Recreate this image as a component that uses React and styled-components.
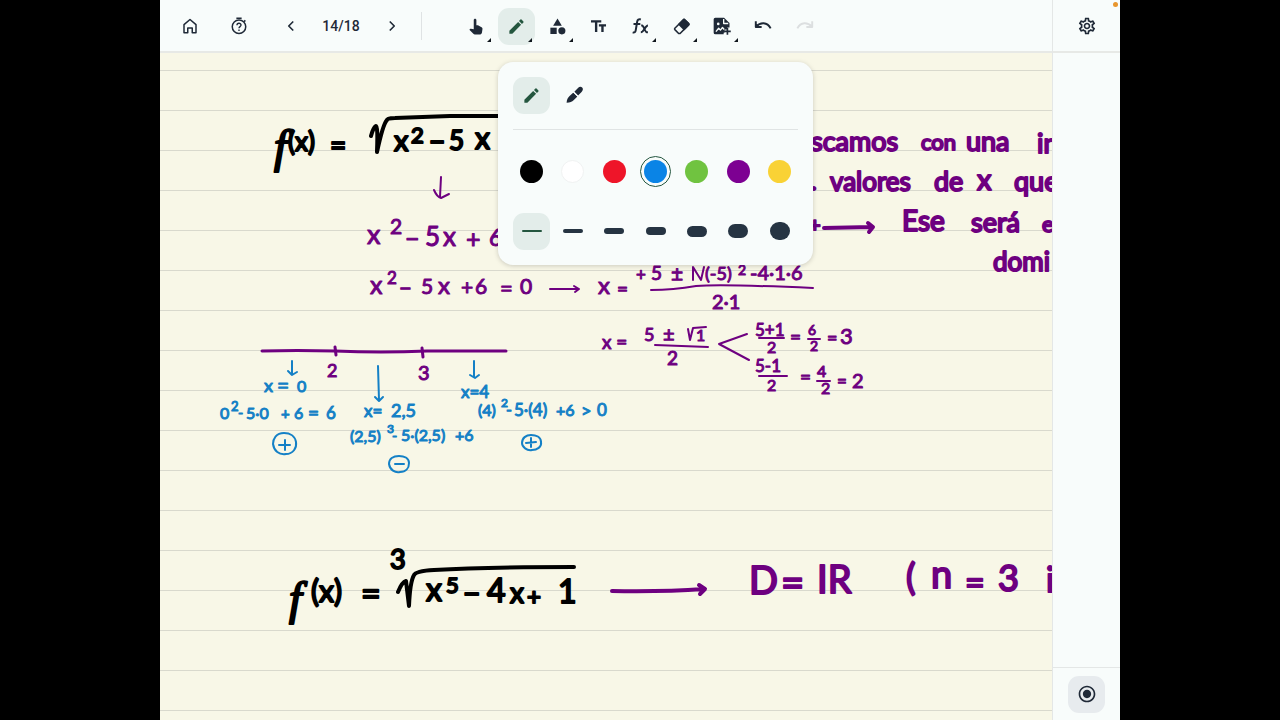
import React, { useState } from "react";
import styled, { createGlobalStyle } from "styled-components";
import { MdEdit, MdCategory, MdTextFields, MdPanToolAlt, MdOutlineSettings, MdRadioButtonChecked } from "react-icons/md";

const Global = createGlobalStyle`
  *, *::before, *::after { box-sizing: border-box; }
  body { margin: 0; background: #000; font-family: Roboto, "Liberation Sans", sans-serif; }
  button { font: inherit; color: inherit; border: 0; padding: 0; background: none; cursor: pointer; }
`;

const INK = "#000000";
const PURPLE = "#6e0080";
const BLUE = "#1480c6";

const Page = styled.div`
  display: grid;
  grid-template-columns: 1fr 6fr 1fr;
  min-height: 100vh;
  background: #000;
`;

const Board = styled.div`
  grid-column: 2;
  display: flex;
  min-width: 0;
  background: #f8fcfb;
  color: #1f2937;
`;

const Workspace = styled.main`
  flex: 1;
  min-width: 0;
  display: flex;
  flex-direction: column;
`;

const Toolbar = styled.header`
  display: flex;
  align-items: center;
  height: 53px;
  padding: 1px 0 0 11px;
  border-bottom: 2px solid #e7e9e6;
`;

const IconButton = styled.button`
  position: relative;
  display: flex;
  align-items: center;
  justify-content: center;
  flex: none;
  width: 37px;
  height: 37px;
  border-radius: 11px;
  background: ${(p) => (p.$tone === "green" ? "#e3edea" : p.$tone === "gray" ? "#e7ebee" : "transparent")};
  color: ${(p) => (p.$tone === "green" ? "#24563f" : p.$faded ? "#dcdfe0" : "#1f2937")};
`;

const PageNav = styled.nav`
  display: flex;
  align-items: center;
  margin-left: 15px;
`;

const Counter = styled.span`
  width: 64px;
  text-align: center;
  font-size: 14px;
  line-height: 20px;
  font-weight: 500;
`;

const Divider = styled.span`
  width: 1px;
  height: 28px;
  margin: 0 35px 0 11px;
  background: #dfe3e4;
`;

const Tools = styled.div`
  display: flex;
  justify-content: space-between;
  flex: 0 0 366px;
`;

const Slot = styled.div`
  position: relative;
`;

const MoreMark = styled.i`
  position: absolute;
  right: 3px;
  bottom: 3px;
  border-style: solid;
  border-width: 0 0 4px 4px;
  border-color: transparent transparent #10161d transparent;
`;

const Gap = styled.div`
  width: 12px;
`;

const Popover = styled.section`
  position: absolute;
  z-index: 2;
  top: 54px;
  left: 0;
  width: 315px;
  padding: 15px;
  border-radius: 15px;
  background: #f8fcfb;
  box-shadow: 0 1px 5px rgba(0, 0, 0, 0.18);
`;

const Row = styled.div`
  display: flex;
  gap: ${(p) => (p.$start ? "6px" : "0")};
  justify-content: ${(p) => (p.$start ? "flex-start" : "space-between")};
`;

const Rule = styled.hr`
  height: 1px;
  margin: 15px 0 23px;
  border: 0;
  background: #e0e4e4;
`;

const Swatch = styled.span`
  width: 23px;
  height: 23px;
  border-radius: 50%;
  background: ${(p) => p.$color};
  border: ${(p) => (p.$color === "#ffffff" ? "1px solid #f0f2f2" : "0")};
  outline: ${(p) => (p.$on ? "1px solid #24563f" : "0")};
  outline-offset: 3px;
`;

const Dash = styled.span`
  width: 20px;
  height: ${(p) => p.$size}px;
  border-radius: 9px;
  background: ${(p) => (p.$on ? "#24563f" : "#263442")};
`;

const Widths = styled(Row)`
  margin-top: 23px;
`;

const Paper = styled.div`
  flex: 1;
  min-height: 0;
  overflow: hidden;
  background: #f8f7e7 linear-gradient(#d9d9cd 1px, transparent 1px) 0 17px / 100% 40px;
`;

const Ink = styled.svg`
  display: block;
  width: 100%;
  fill: none;
  stroke-linecap: round;
  stroke-linejoin: round;
`;

const Note = styled.text`
  font-family: ${(p) => (p.$cursive ? '"Liberation Serif", serif' : 'Lato, "Open Sans", sans-serif')};
  font-style: ${(p) => (p.$cursive ? "italic" : "normal")};
  font-size: ${(p) => p.$size}px;
`;

const Sidebar = styled.aside`
  position: relative;
  display: flex;
  flex-direction: column;
  justify-content: space-between;
  flex: none;
  width: 68px;
  border-left: 1px solid #e4e7e6;
`;

const SideCell = styled.div`
  display: flex;
  align-items: center;
  justify-content: center;
  height: 53px;
  padding: ${(p) => (p.$foot ? "0" : "1px 0 0")};
  border-top: ${(p) => (p.$foot ? "1px solid #e4e7e6" : "0")};
  border-bottom: ${(p) => (p.$foot ? "0" : "2px solid #e7e9e6")};
`;

const StatusDot = styled.span`
  position: absolute;
  top: 2px;
  right: 2px;
  width: 5px;
  height: 5px;
  border-radius: 50%;
  background: #e8962e;
`;

const Svg = ({ size = 18, children, width = 2 }) => (
  <svg width={size} height={size} viewBox="0 0 24 24" fill="none" stroke="currentColor" strokeWidth={width} strokeLinejoin="round" aria-hidden="true">
    {children}
  </svg>
);

const HomeIcon = () => (
  <Svg><path d="M4 10.2 12 3.4l8 6.8V21h-5v-6.5h-6V21H4z" /></Svg>
);
const TimerIcon = () => (
  <Svg>
    <path d="M8.5 1.6h7M18.7 6.2l1.8-1.7" />
    <circle cx="12" cy="13" r="9" />
    <path d="M9.3 11c0-3.6 5.4-3.5 5.4-.2 0 2.1-2.7 2-2.7 4.2M12 16.6v2" strokeWidth="1.8" />
  </Svg>
);
const Chevron = ({ right }) => (
  <Svg width={2.2}><path d={right ? "M9 6l6 6-6 6" : "M15 6l-6 6 6 6"} /></Svg>
);
const FxIcon = () => (
  <Svg size={20}>
    <path d="M13 4.2c-2.7-.9-4 .2-4.4 2.7L6.9 17c-.4 2.4-1.6 3.3-3.7 2.6M4.2 9.5h8.2M13.4 11.5h1.3c1.5 0 3.5 8 5.3 8h1.5M21.5 11.5c-3.2 0-4.8 8-8.5 8" strokeWidth="2.4" />
  </Svg>
);
const EraserIcon = () => (
  <Svg size={19}>
    <path d="M3.6 14.2 14.4 3.4q.8-.8 1.6 0l5 5q.8.8 0 1.6L10.2 20.8H8.4l-4.8-4.9q-.8-.9 0-1.7z" />
    <path d="M8.7 9.1 14.4 3.4q.8-.8 1.6 0l5 5q.8.8 0 1.6l-5.7 5.7z" fill="currentColor" />
  </Svg>
);
const InsertIcon = () => (
  <Svg size={20}>
    <path d="M4 2h10.5L21 8.5v5.2h-2.5v2.5H15V20h-1v2H4q-2 0-2-2V4q0-2 2-2z" fill="currentColor" stroke="none" />
    <path d="M14 3.5V9h5.5M4.7 18.8 8 14.7l2.1 2.3 2.5-3.2 2 2.4" stroke="#f8fcfb" strokeWidth="1.6" />
    <circle cx="7.5" cy="9.5" r="1.6" fill="#f8fcfb" stroke="none" />
    <path d="M18.5 14.5v8M14.5 18.5h8" />
  </Svg>
);
const UndoIcon = ({ flip }) => (
  <Svg size={18}>
    <g transform={flip ? "matrix(-1 0 0 1 24 0)" : undefined}>
      <path d="M2.4 5.6v7.6h7.8M2.8 12.7C8.5 6.8 17.5 6.2 22.2 15.2" strokeWidth="2.6" />
    </g>
  </Svg>
);
const HighlighterIcon = () => (
  <Svg size={20}>
    <g fill="currentColor" stroke="none">
      <path d="M15.3 3.8c1.7-1.7 3.9-2.2 5.3-.7 1.5 1.5 1 3.5-.7 5.2l-4.2 4.2-4.5-4.5z" />
      <path d="m10.1 9.1 4.8 4.8-4.6 4.5c-1.8 1.8-4.2 2.8-8.4 3 .4-4 1.5-6.1 3.3-7.9z" />
    </g>
    <path d="m9.7 7.8 6.4 6.4" stroke="#f8fcfb" strokeWidth="1.3" />
  </Svg>
);

const TOOLS = [
  ["Pointer", <MdPanToolAlt size={21} />, true],
  ["Pen", <MdEdit size={19} />, true],
  ["Shapes", <MdCategory size={19} />, true],
  ["Text", <MdTextFields size={19} />, false],
  ["Formula", <FxIcon />, true],
  ["Eraser", <EraserIcon />, true],
  ["Insert", <InsertIcon />, true],
  ["Undo", <UndoIcon />, false],
  ["Redo", <UndoIcon flip />, false],
];

const COLORS = [
  ["Black", "#000000"], ["White", "#ffffff"], ["Red", "#ee1529"], ["Blue", "#0a84e6"],
  ["Green", "#70c340"], ["Purple", "#7d0092"], ["Yellow", "#f9d235"],
];
const WIDTHS = [2, 4, 6, 8, 11, 14, 18];

/* Each note: [x, baseline, size, text, cursive] */
const NOTES = [
  { color: INK, weight: 2, items: [
    [274, 162, 46, "f", true], [288, 151, 26, "(x)"], [330, 155, 28, "="],
    [394, 151, 29, "x"], [411, 143, 22, "2"], [429, 152, 28, "−"], [449, 150, 26, "5"], [475, 149, 30, "x"],
    [390, 569, 27, "3"], [289, 614, 46, "f", true], [311, 602, 30, "(x)"], [361, 606, 34, "="],
    [426, 601, 32, "x"], [446, 593, 22, "5"], [463, 604, 30, "−"], [487, 602, 32, "4"],
    [510, 603, 28, "x"], [527, 605, 24, "+"], [558, 603, 32, "1"],
  ] },
  { color: PURPLE, weight: 1, items: [
    [367, 244, 27, "x"], [390, 234, 21, "2"], [405, 248, 25, "−"], [425, 246, 26, "5"], [443, 246, 26, "x"], [466, 248, 25, "+"], [489, 246, 23, "6"],
    [370, 294, 25, "x"], [387, 284, 17, "2"], [399, 296, 22, "−"], [421, 294, 21, "5"], [438, 294, 24, "x"],
    [461, 295, 21, "+"], [475, 294, 21, "6"], [500, 296, 22, "="], [520, 294, 21, "0"],
    [598, 294, 24, "x"], [617, 296, 19, "="],
    [636, 281, 17, "+"], [651, 280, 19, "5"], [671, 281, 21, "±"], [705, 280, 18, "(-5)"], [738, 275, 14, "2"],
    [750, 280, 20, "-4·1·6"], [712, 309, 20, "2·1"],
    [602, 349, 19, "x ="], [644, 341, 18, "5"], [663, 341, 20, "±"], [696, 341, 16, "1"], [667, 365, 19, "2"],
    [755, 336, 17, "5+1"], [767, 353, 16, "2"], [790, 344, 19, "="], [808, 335, 14, "6"], [810, 351, 14, "2"],
    [827, 344, 18, "="], [840, 344, 22, "3"],
    [755, 372, 17, "5-1"], [767, 391, 16, "2"], [800, 384, 19, "="], [817, 377, 16, "4"], [821, 394, 16, "2"],
    [837, 387, 17, "="], [852, 388, 20, "2"],
    [327, 377, 18, "2"], [418, 380, 20, "3"],
  ] },
  { color: PURPLE, weight: 2, items: [
    [811, 151, 27, "scamos"], [921, 150, 22, "con"], [966, 151, 27, "una"], [1037, 153, 27, "in"],
    [811, 190, 24, "."], [830, 191, 26, "valores"], [934, 191, 27, "de"], [977, 190, 29, "x"], [1014, 191, 27, "que"],
    [809, 232, 20, "+"], [902, 231, 28, "Ese"], [971, 232, 27, "será"], [1042, 232, 22, "e"], [993, 271, 26, "domi"],
    [749, 594, 38, "D"], [781, 597, 40, "="], [817, 593, 38, "IR"],
    [906, 590, 36, "("], [931, 588, 38, "n"], [965, 595, 34, "="], [998, 591, 36, "3"], [1046, 592, 34, "i"],
  ] },
  { color: BLUE, weight: 1, items: [
    [264, 392, 18, "x"], [277, 393, 21, "="], [297, 392, 16, "0"],
    [220, 419, 16, "0"], [231, 411, 13, "2"], [238, 418, 14, "-"], [246, 419, 16, "5·0"], [281, 419, 15, "+"],
    [294, 419, 16, "6"], [308, 420, 19, "="], [326, 419, 17, "6"],
    [364, 417, 17, "x="], [391, 417, 18, "2,5"],
    [350, 442, 16, "(2,5)"], [387, 433, 12, "3"], [392, 441, 14, "-"], [401, 441, 16, "5·(2,5)"], [455, 441, 16, "+6"],
    [461, 398, 17, "x=4"],
    [478, 416, 16, "(4)"], [501, 407, 12, "2"], [506, 415, 16, "-"], [514, 416, 17, "5·(4)"], [556, 416, 16, "+6"],
    [581, 417, 18, ">"], [597, 416, 17, "0"],
  ] },
];

/* Arrows, roots, fraction bars, the number line and the circled signs */
const STROKES = [
  [INK, 4, "M371 136q2-8 5-10 2 0 1 26 6-28 10-32 0-2 8-2l55-2h60"],
  [INK, 4, "M398 592q4-10 8-11l3 25q1-24 5-31 2-4 20-5 50-3 140-3"],
  [PURPLE, 2, "M441 177l-1 20M434 190q3 7 7 8l8-4"],
  [PURPLE, 2, "M550 289l28 0M574 286l5 3-4 3"],
  [PURPLE, 2, "M693 280v-13l8 13 3-13"],
  [PURPLE, 2, "M651 290q22 0 45-4 26-2 117 2"],
  [PURPLE, 2, "M688 329l2 11 3-12 13-1M655 345l53 2"],
  [PURPLE, 2, "M747 334l-28 10 30 16"],
  [PURPLE, 2, "M759 338h25M808 339h12M759 376h28M817 381h13"],
  [PURPLE, 3, "M262 351q34-1 73 0 46 2 92 0h79"],
  [PURPLE, 3, "M335 347l1 8M422 348l1 9"],
  [PURPLE, 4, "M824 228l48-1M868 223l5 4-4 5"],
  [PURPLE, 4, "M612 591q50 1 92-2M699 585l6 4-5 5"],
  [BLUE, 2, "M292 361v14M288 371l4 4 5-3"],
  [BLUE, 2, "M378 366l1 34M375 397l4 4 4-4"],
  [BLUE, 2, "M474 361v16M470 375l5 3 4-3"],
  [BLUE, 2, "M284 433c-8 0-11 6-11 11 1 7 6 11 13 10 7 0 11-6 10-12s-6-9-12-9zM285 440v10M279 445l11 0"],
  [BLUE, 2, "M399 456c-6 0-10 3-10 8 1 6 6 9 11 8 6 0 9-4 9-9s-5-7-10-7zM395 464h9"],
  [BLUE, 2, "M531 435c-5 0-9 3-9 8 0 4 5 8 10 7 5 0 10-3 9-8 0-5-5-7-10-7zM531 438v9M526 443l10-1"],
];

function Handwriting() {
  return (
    <Ink viewBox="160 53 892 667" preserveAspectRatio="xMinYMin meet" role="group" aria-label="Handwritten notes">
      {STROKES.map(([color, width, d]) => (
        <path key={d} d={d} stroke={color} strokeWidth={width} />
      ))}
      {NOTES.map((g) => (
        <g key={g.color + g.weight} fill={g.color} stroke={g.color} strokeWidth={g.weight}>
          {g.items.map(([x, y, size, text, cursive]) => (
            <Note key={`${x}-${y}`} x={x} y={y} $size={size} $cursive={cursive}>{text}</Note>
          ))}
        </g>
      ))}
    </Ink>
  );
}

function PenMenu() {
  const [color, setColor] = useState("Blue");
  const [width, setWidth] = useState(2);
  return (
    <Popover aria-label="Pen options">
      <Row $start>
        <IconButton $tone="green" aria-label="Pencil" aria-pressed="true"><MdEdit size={19} /></IconButton>
        <IconButton aria-label="Highlighter" aria-pressed="false"><HighlighterIcon /></IconButton>
      </Row>
      <Rule />
      <Row>
        {COLORS.map(([name, value]) => (
          <IconButton key={name} aria-label={name} aria-pressed={color === name} onClick={() => setColor(name)}>
            <Swatch $color={value} $on={color === name} />
          </IconButton>
        ))}
      </Row>
      <Widths>
        {WIDTHS.map((w) => (
          <IconButton key={w} $tone={width === w ? "green" : undefined} aria-label={`Width ${w}`} aria-pressed={width === w} onClick={() => setWidth(w)}>
            <Dash $size={w} $on={width === w} />
          </IconButton>
        ))}
      </Widths>
    </Popover>
  );
}

export default function App() {
  return (
    <>
      <Global />
      <Page>
        <Board>
          <Workspace>
            <Toolbar>
              <IconButton aria-label="Home"><HomeIcon /></IconButton>
              <Gap />
              <IconButton aria-label="Timer"><TimerIcon /></IconButton>
              <PageNav aria-label="Pages">
                <IconButton aria-label="Previous page"><Chevron /></IconButton>
                <Counter>14/18</Counter>
                <IconButton aria-label="Next page"><Chevron right /></IconButton>
              </PageNav>
              <Divider />
              <Tools>
                {TOOLS.map(([name, icon, more]) => (
                  <Slot key={name}>
                    <IconButton aria-label={name} $tone={name === "Pen" ? "green" : undefined} $faded={name === "Redo"}>
                      {icon}
                      {more && <MoreMark />}
                    </IconButton>
                    {name === "Pen" && <PenMenu />}
                  </Slot>
                ))}
              </Tools>
            </Toolbar>
            <Paper><Handwriting /></Paper>
          </Workspace>
          <Sidebar>
            <StatusDot />
            <SideCell><IconButton aria-label="Settings"><MdOutlineSettings size={20} /></IconButton></SideCell>
            <SideCell $foot><IconButton $tone="gray" aria-label="Record"><MdRadioButtonChecked size={20} /></IconButton></SideCell>
          </Sidebar>
        </Board>
      </Page>
    </>
  );
}
